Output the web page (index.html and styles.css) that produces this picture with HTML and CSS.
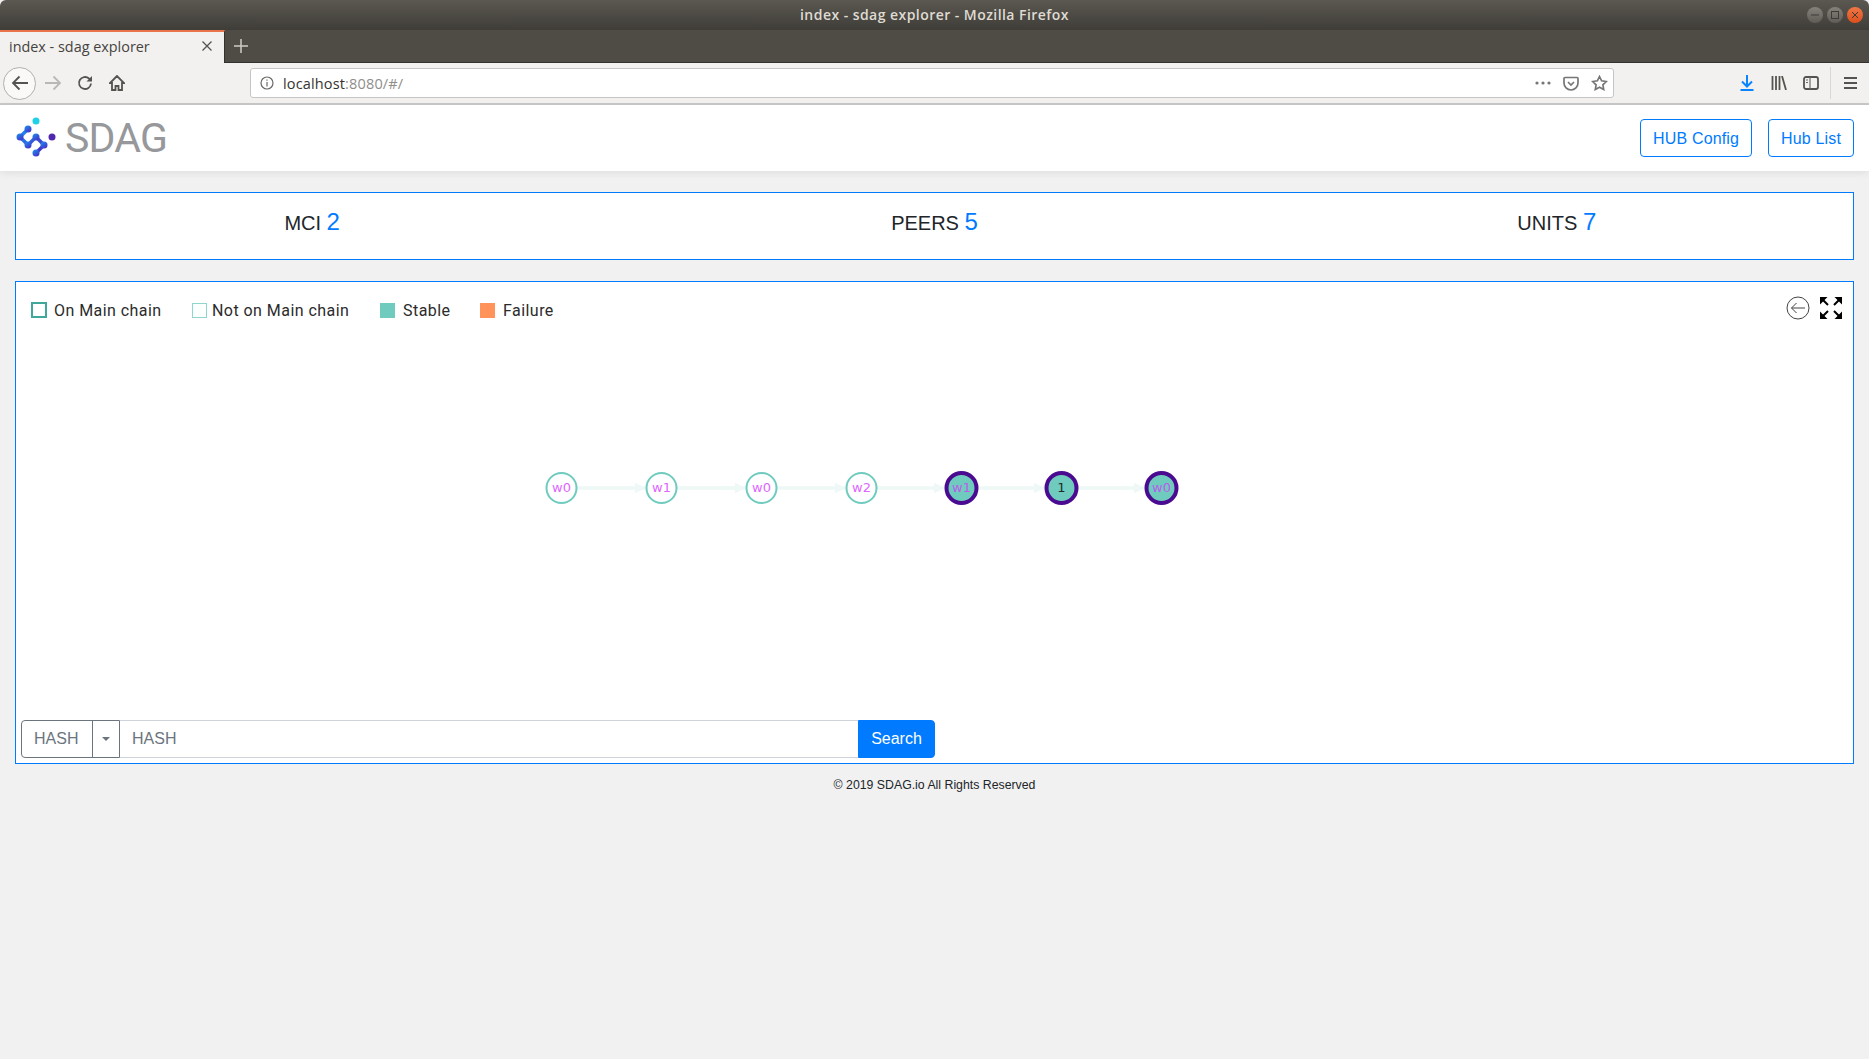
FILE: index.html
```html
<!DOCTYPE html>
<html lang="en">
<head>
    <meta charset="UTF-8">
    <meta name="viewport" content="width=device-width, initial-scale=1.0">
    <title>index - sdag explorer</title>
    <link rel="stylesheet" href="styles.css">
</head>
<body>

    <!-- browser window chrome -->
    <div class="titlebar">
        <span class="title-text">index - sdag explorer - Mozilla Firefox</span>
        <div class="win-btns">
            <span class="win-btn"><svg width="10" height="10" viewBox="0 0 10 10"><path d="M1 5h8" class="win-glyph"/></svg></span>
            <span class="win-btn"><svg width="10" height="10" viewBox="0 0 10 10"><rect x="1.500" y="1.500" width="7" height="7" class="win-glyph"/></svg></span>
            <span class="win-btn win-close"><svg width="10" height="10" viewBox="0 0 10 10"><path d="M2 2l6 6M8 2l-6 6" class="win-glyph"/></svg></span>
        </div>
    </div>
    <div class="tabbar">
        <div class="tab">
            <span class="tab-title">index - sdag explorer</span>
            <svg width="10" height="10" viewBox="0 0 10 10"><path d="M0.500 0.500l9 9M9.500 0.500l-9 9" class="tab-x"/></svg>
        </div>
        <svg class="new-tab" width="14" height="14" viewBox="0 0 14 14"><path d="M7 0v14M0 7h14" class="plus"/></svg>
    </div>
    <div class="toolbar">
        <span class="back-btn">
            <svg width="18" height="16" viewBox="0 0 18 16"><path d="M17 8H2M8.500 1.500L2 8l6.500 6.500" class="ico"/></svg>
        </span>
        <span class="tool-btn">
            <svg width="18" height="16" viewBox="0 0 18 16"><path d="M1 8h15M9.500 1.500L16 8l-6.500 6.500" class="ico ico-off"/></svg>
        </span>
        <span class="tool-btn">
            <svg width="16" height="16" viewBox="0 0 16 16"><path d="M14 8.500A6 6 0 1 1 12 3.500L14.500 5.500" class="ico"/><path d="M15 1v5.500H9.500z" class="ico-fill"/></svg>
        </span>
        <span class="tool-btn">
            <svg width="16" height="16" viewBox="0 0 16 16"><path d="M8 1L1 8h2v7h3.500v-4h3v4H13V8h2z" class="ico"/></svg>
        </span>
        <div class="urlbar">
            <svg width="14" height="14" viewBox="0 0 14 14"><circle cx="7" cy="7" r="6" class="ico-thin"/><path d="M7 6v4.500M7 3.500v1.300" class="ico-thin"/></svg>
            <span class="url"><span class="url-host">localhost</span>:8080/#/</span>
            <svg class="url-dots" width="16" height="4" viewBox="0 0 16 4"><circle cx="2" cy="2" r="1.600"/><circle cx="8" cy="2" r="1.600"/><circle cx="14" cy="2" r="1.600"/></svg>
            <svg width="16" height="15" viewBox="0 0 16 15"><path d="M1 2.500a1 1 0 0 1 1-1h12a1 1 0 0 1 1 1V7a7 7 0 0 1-14 0z" class="ico-gray"/><path d="M5 6l3 3 3-3" class="ico-gray"/></svg>
            <svg width="17" height="16" viewBox="0 0 17 16"><path d="M8.500 1.500l2.100 4.300 4.700.7-3.400 3.300.8 4.700-4.200-2.200-4.200 2.200.8-4.700L1.700 6.500l4.700-.7z" class="ico-gray"/></svg>
        </div>
        <div class="tool-right">
            <span class="tool-btn">
                <svg width="14" height="16" viewBox="0 0 14 16"><path d="M7 0v11M2 6.500L7 11.500l5-5M0.500 15h13" class="ico-blue"/></svg>
            </span>
            <span class="tool-btn">
                <svg width="16" height="14" viewBox="0 0 16 14"><path d="M1.500 0v14M5 0v14M8.500 0v14M11 0l4 14" class="ico"/></svg>
            </span>
            <span class="tool-btn">
                <svg width="16" height="14" viewBox="0 0 16 14"><rect x="1" y="1" width="14" height="12" rx="2" class="ico"/><path d="M7 1v12M3 4h2M3 6.500h2" class="ico-thin"/></svg>
            </span>
            <span class="tool-sep"></span>
            <span class="tool-btn">
                <svg width="13" height="12" viewBox="0 0 13 12"><path d="M0 1h13M0 6h13M0 11h13" class="ico"/></svg>
            </span>
        </div>
    </div>

    <!-- page -->
    <header class="site-header">
        <div class="logo">
            <svg width="42" height="42" viewBox="0 0 42 42">
                <defs>
                    <linearGradient id="logoGrad" x1="0" y1="0" x2="0.700" y2="1">
                        <stop offset="0" stop-color="#1b92f5"/>
                        <stop offset="1" stop-color="#4433c8"/>
                    </linearGradient>
                </defs>
                <circle cx="20" cy="5" r="3.500" fill="#1fd0e6"/>
                <circle cx="36" cy="21" r="3.500" fill="#5127b0"/>
                <path d="M12 13L4 21l8 8 8-8 8 8-8 8" fill="none" stroke="url(#logoGrad)" stroke-width="3.500" stroke-linejoin="round" stroke-linecap="round"/>
                <g fill="url(#logoGrad)">
                    <circle cx="12" cy="13" r="3.500"/>
                    <circle cx="4" cy="21" r="3.500"/>
                    <circle cx="12" cy="29" r="3.500"/>
                    <circle cx="20" cy="21" r="3.500"/>
                    <circle cx="28" cy="29" r="3.500"/>
                    <circle cx="20" cy="37" r="3.500"/>
                </g>
            </svg>
            <span class="logo-text">SDAG</span>
        </div>
        <div class="header-btns">
            <button class="btn-outline">HUB Config</button>
            <button class="btn-outline">Hub List</button>
        </div>
    </header>

    <section class="stats">
        <div class="stats-row">
            <div class="stat">MCI <span class="stat-num">2</span></div>
            <div class="stat">PEERS <span class="stat-num">5</span></div>
            <div class="stat">UNITS <span class="stat-num">7</span></div>
        </div>
    </section>

    <section class="dag">
        <div class="dag-top">
            <div class="legend">
                <span class="legend-item"><i class="swatch sw-main"></i>On Main chain</span>
                <span class="legend-item"><i class="swatch sw-notmain"></i>Not on Main chain</span>
                <span class="legend-item"><i class="swatch sw-stable"></i>Stable</span>
                <span class="legend-item"><i class="swatch sw-fail"></i>Failure</span>
            </div>
            <div class="dag-tools">
                <svg width="24" height="24" viewBox="0 0 24 24"><circle cx="12" cy="12" r="11" class="dag-back"/><path d="M19 12H5.500M10.500 7l-5 5 5 5" class="dag-back"/></svg>
                <svg width="24" height="24" viewBox="0 0 24 24">
                    <path d="M1 1h7.500L1 8.500zM23 1v7.500L15.500 1zM1 23v-7.500L8.500 23zM23 23h-7.500L23 15.500z"/>
                    <path d="M3 3l6 6M21 3l-6 6M3 21l6-6M21 21l-6-6" class="full-shaft"/>
                </svg>
            </div>
        </div>

        <svg class="graph" viewBox="0 0 1837 386">
            <defs>
                <marker id="arrow" markerWidth="4" markerHeight="4" refX="3" refY="2" orient="auto">
                    <path d="M0 0.500L3 2L0 3.500z" fill="#eef8f6"/>
                </marker>
            </defs>
            <path d="M560.500 154h69" class="edge" marker-end="url(#arrow)"/>
            <path d="M660.500 154h69" class="edge" marker-end="url(#arrow)"/>
            <path d="M760.500 154h69" class="edge" marker-end="url(#arrow)"/>
            <path d="M860.500 154h68" class="edge" marker-end="url(#arrow)"/>
            <path d="M961.500 154h67" class="edge" marker-end="url(#arrow)"/>
            <path d="M1061.500 154h67" class="edge" marker-end="url(#arrow)"/>

            <circle cx="545.500" cy="154" r="15" class="node"/>
            <text x="545.500" y="158" class="node-label">w0</text>
            <circle cx="645.500" cy="154" r="15" class="node"/>
            <text x="645.500" y="158" class="node-label">w1</text>
            <circle cx="745.500" cy="154" r="15" class="node"/>
            <text x="745.500" y="158" class="node-label">w0</text>
            <circle cx="845.500" cy="154" r="15" class="node"/>
            <text x="845.500" y="158" class="node-label">w2</text>
            <circle cx="945.500" cy="154" r="15" class="node node-stable"/>
            <text x="945.500" y="158" class="node-label">w1</text>
            <circle cx="1045.500" cy="154" r="15" class="node node-stable"/>
            <text x="1045.500" y="158" class="node-label node-dark">1</text>
            <circle cx="1145.500" cy="154" r="15" class="node node-stable"/>
            <text x="1145.500" y="158" class="node-label">w0</text>
        </svg>

        <div class="search">
            <div class="search-type">
                <span class="type-value">HASH</span>
                <span class="type-caret"></span>
            </div>
            <input class="search-input" type="text" placeholder="HASH">
            <button class="search-btn">Search</button>
        </div>
    </section>

    <footer class="site-footer">© 2019 SDAG.io All Rights Reserved</footer>

</body>
</html>
```

FILE: styles.css
```css
html, body {
    height: 100%;
}
body {
    margin: 0;
    background: #f1f1f1;
    font-family: "Liberation Sans", Arial, sans-serif;
    overflow: hidden;
}

/* window chrome */
.titlebar {
    height: 30px;
    box-sizing: border-box;
    padding-bottom: 2px;
    background: linear-gradient(#5b5851, #3f3d38);
    border-radius: 6px 6px 0 0;
    display: flex;
    align-items: center;
    justify-content: center;
    position: relative;
}
.title-text {
    color: #dfdbd2;
    font-family: "Open Sans", sans-serif;
    font-size: 14px;
    font-weight: 600;
    letter-spacing: 0.45px;
}
.win-btns {
    position: absolute;
    right: 6px;
    top: 7px;
    display: flex;
    gap: 4px;
}
.win-btn {
    width: 16px;
    height: 16px;
    border-radius: 50%;
    background: linear-gradient(#85827c, #5f5c56);
    display: flex;
    align-items: center;
    justify-content: center;
}
.win-close {
    background: linear-gradient(#f07746, #dc4f1c);
}
.win-glyph {
    fill: none;
    stroke: #3c3b37;
    stroke-width: 1;
}
.tabbar {
    height: 33px;
    background: #4f4c45;
    border-bottom: 1px solid #34322e;
    box-sizing: border-box;
    display: flex;
    align-items: center;
}
.tab {
    width: 225px;
    height: 33px;
    box-sizing: border-box;
    background: #f3f1ef;
    border-top: 2px solid #e9744a;
    border-right: 1px solid #34322e;
    padding: 0 12px 2px 9px;
    display: flex;
    align-items: center;
    justify-content: space-between;
}
.tab-title {
    font-family: "Open Sans", sans-serif;
    font-size: 14.4px;
    color: #45433f;
}
.tab-x {
    fill: none;
    stroke: #55534f;
    stroke-width: 1.300;
}
.new-tab {
    margin-left: 9px;
}
.plus {
    fill: none;
    stroke: #cfccc6;
    stroke-width: 1.500;
}
.toolbar {
    height: 42px;
    box-sizing: border-box;
    background: #f3f1ef;
    border-bottom: 2px solid #c9c9c9;
    display: flex;
    align-items: center;
    padding-left: 3px;
}
.back-btn {
    width: 33px;
    height: 33px;
    box-sizing: border-box;
    border: 1px solid #b1afac;
    border-radius: 50%;
    background: #faf9f8;
    display: flex;
    align-items: center;
    justify-content: center;
    margin-right: 1px;
}
.tool-btn {
    width: 32px;
    height: 32px;
    display: flex;
    align-items: center;
    justify-content: center;
}
.ico, .ico-off, .ico-thin, .ico-gray, .ico-blue {
    fill: none;
    stroke: #55534f;
    stroke-width: 1.800;
}
.ico-off {
    stroke: #b9b8b5;
}
.ico-thin {
    stroke-width: 1.200;
    stroke: #6a6966;
}
.ico-gray {
    stroke: #777674;
    stroke-width: 1.700;
}
.ico-blue {
    stroke: #0a84ff;
    stroke-width: 2;
}
.ico-fill {
    fill: #55534f;
}
.urlbar {
    width: 1364px;
    height: 30px;
    box-sizing: border-box;
    margin-left: 117px;
    background: #fff;
    border: 1px solid #c5c5c5;
    border-radius: 3px;
    display: flex;
    align-items: center;
    padding: 0 5px 0 9px;
    gap: 12px;
}
.url {
    flex: 1;
    font-family: "Open Sans", sans-serif;
    font-size: 14.5px;
    letter-spacing: 0.15px;
    color: #8f8e8c;
    margin-left: -3px;
}
.url-host {
    color: #35342f;
}
.url-dots {
    fill: #777674;
}
.tool-right {
    margin-left: auto;
    display: flex;
    align-items: center;
    padding-right: 3px;
}
.tool-sep {
    width: 1px;
    height: 32px;
    background: #d8d7d5;
    margin: 0 3px;
}

/* header */
.site-header {
    height: 66px;
    background: #fff;
    box-shadow: 0 2px 8px rgba(0, 0, 0, 0.08);
    display: flex;
    align-items: center;
    justify-content: space-between;
    padding: 0 15px 0 16px;
}
.logo {
    display: flex;
    align-items: center;
    margin-top: -2px;
}
.logo-text {
    font-family: Roboto, sans-serif;
    font-size: 41px;
    color: #96989b;
    letter-spacing: -0.800px;
    margin-left: 7px;
    line-height: 42px;
    padding-top: 1px;
}
.header-btns {
    display: flex;
    gap: 16px;
}
.btn-outline {
    height: 38px;
    padding: 1px 12px 0;
    background: #fff;
    border: 1px solid #007bff;
    border-radius: 4px;
    color: #007bff;
    font-family: "Liberation Sans", Arial, sans-serif;
    font-size: 16px;
    letter-spacing: 0.15px;
}

/* counters */
.stats {
    margin: 21px 15px 0;
    height: 68px;
    box-sizing: border-box;
    background: #fff;
    border: 1px solid #007bff;
}
.stats-row {
    margin: 0 -15px;
    display: grid;
    grid-template-columns: repeat(3, 1fr);
    padding-top: 15px;
}
.stat {
    text-align: center;
    font-size: 20px;
    line-height: 28px;
    color: #212529;
}
.stat-num {
    font-size: 24px;
    color: #007bff;
}

/* dag panel */
.dag {
    margin: 21px 15px 0;
    height: 483px;
    box-sizing: border-box;
    background: #fff;
    border: 1px solid #007bff;
    display: flex;
    flex-direction: column;
}
.dag-top {
    height: 52px;
    box-sizing: border-box;
    padding: 16px 10px 0 15px;
    display: flex;
    justify-content: space-between;
    align-items: flex-start;
}
.legend {
    display: flex;
    padding-top: 5px;
    font-family: Roboto, sans-serif;
    font-size: 16px;
    letter-spacing: 0.45px;
    line-height: 16px;
    color: #2b2b2b;
}
.legend-item {
    display: flex;
    align-items: center;
}
.legend-item:nth-child(1) { width: 161px; }
.legend-item:nth-child(2) { width: 188px; }
.legend-item:nth-child(3) { width: 100px; }
.swatch {
    width: 15px;
    height: 15px;
    box-sizing: border-box;
    margin: -2px 8px 0 0;
}
.sw-main {
    width: 16px;
    height: 16px;
    border: 2px solid #3ea99b;
    margin-right: 7px;
}
.sw-notmain {
    border: 1px solid #8fd6cc;
    margin-right: 5px;
    background: #fbfffe;
}
.sw-stable {
    background: #70cbbf;
}
.sw-fail {
    background: #ff9359;
}
.dag-tools {
    display: flex;
    gap: 9px;
    margin-top: -2px;
}
.dag-back {
    fill: none;
    stroke: #444;
    stroke-width: 1;
}
.full-shaft {
    fill: none;
    stroke: #000;
    stroke-width: 2;
}
.graph {
    display: block;
    flex: 1;
    min-height: 0;
    width: 100%;
}
.edge {
    fill: none;
    stroke: #eef8f6;
    stroke-width: 3.500;
}
.node {
    fill: #fff;
    stroke: #70cbbf;
    stroke-width: 2;
}
.node-stable {
    fill: #70cbbf;
    stroke: #4b0b91;
    stroke-width: 4;
}
.node-label {
    font-family: "DejaVu Sans", sans-serif;
    font-size: 13px;
    text-anchor: middle;
    fill: #dd66ff;
}
.node-stable + .node-label {
    fill: #bc5cec;
}
.node-stable + .node-dark {
    fill: #1c2b28;
}
.search {
    display: flex;
    height: 38px;
    padding: 0 0 5px 5px;
}
.search-type {
    width: 99px;
    box-sizing: border-box;
    border: 1px solid #6c757d;
    border-radius: 4px 0 0 4px;
    display: flex;
    align-items: center;
    color: #6c757d;
    font-size: 16px;
}
.type-value {
    width: 71px;
    height: 100%;
    box-sizing: border-box;
    padding-left: 12px;
    line-height: 36px;
    border-right: 1px solid #6c757d;
}
.type-caret {
    margin-left: 9px;
    border-top: 4px solid #6c757d;
    border-left: 4px solid transparent;
    border-right: 4px solid transparent;
}
.search-input {
    width: 738px;
    box-sizing: border-box;
    border: 1px solid #ced4da;
    border-width: 1px 0;
    padding: 0 12px;
    font-family: "Liberation Sans", Arial, sans-serif;
    font-size: 16px;
    color: #495057;
    outline: none;
}
.search-input::placeholder {
    color: #6c757d;
    opacity: 1;
}
.search-btn {
    width: 77px;
    border: 1px solid #007bff;
    border-radius: 0 4px 4px 0;
    background: #007bff;
    color: #fff;
    font-family: "Liberation Sans", Arial, sans-serif;
    font-size: 16px;
}
.site-footer {
    margin-top: 13px;
    text-align: center;
    font-size: 12.3px;
    line-height: 16px;
    color: #212529;
}
```
